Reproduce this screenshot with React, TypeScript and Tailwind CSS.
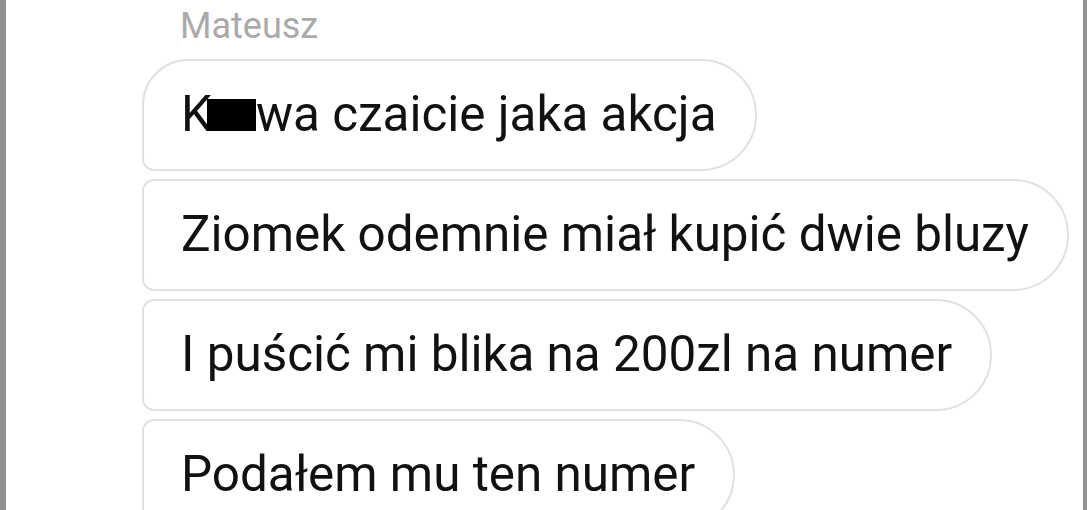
import React from "react";

const font = { fontFamily: "Roboto, 'Noto Sans', sans-serif" };

function Bubble({ children, first }: { children: React.ReactNode; first?: boolean }) {
  return (
    <div
      className={
        "shrink-0 self-start flex items-center h-[112px] pl-[37px] pr-[38px] border-2 border-[#e0e0e0] bg-white text-[49.4px] text-[#111] " +
        (first ? "rounded-tl-[46px] rounded-bl-[12px] rounded-r-[56px]" : "rounded-l-[12px] rounded-r-[56px]")
      }
    >
      <span className="leading-none whitespace-nowrap">{children}</span>
    </div>
  );
}

export default function App() {
  return (
    <div className="w-[1087px] h-[510px] flex bg-white overflow-hidden" style={font}>
      <div className="w-[6px] bg-[#919191] shrink-0" />
      <div className="flex-1 flex flex-col pl-[136px] gap-[8px]">
        <div className="shrink-0 pl-[38px] h-[51px] text-[36px] text-[#aaaaaa] leading-none flex items-center">Mateusz</div>
        <Bubble first>
          K<span className="inline-block -ml-[5px] w-[49px] h-[32px] bg-black align-baseline" />wa czaicie jaka akcja
        </Bubble>
        <Bubble>Ziomek odemnie miał kupić dwie bluzy</Bubble>
        <Bubble>I puścić mi blika na 200zl na numer</Bubble>
        <Bubble>Podałem mu ten numer</Bubble>
      </div>
      <div className="w-[4px] bg-[#919191] shrink-0" />
    </div>
  );
}
